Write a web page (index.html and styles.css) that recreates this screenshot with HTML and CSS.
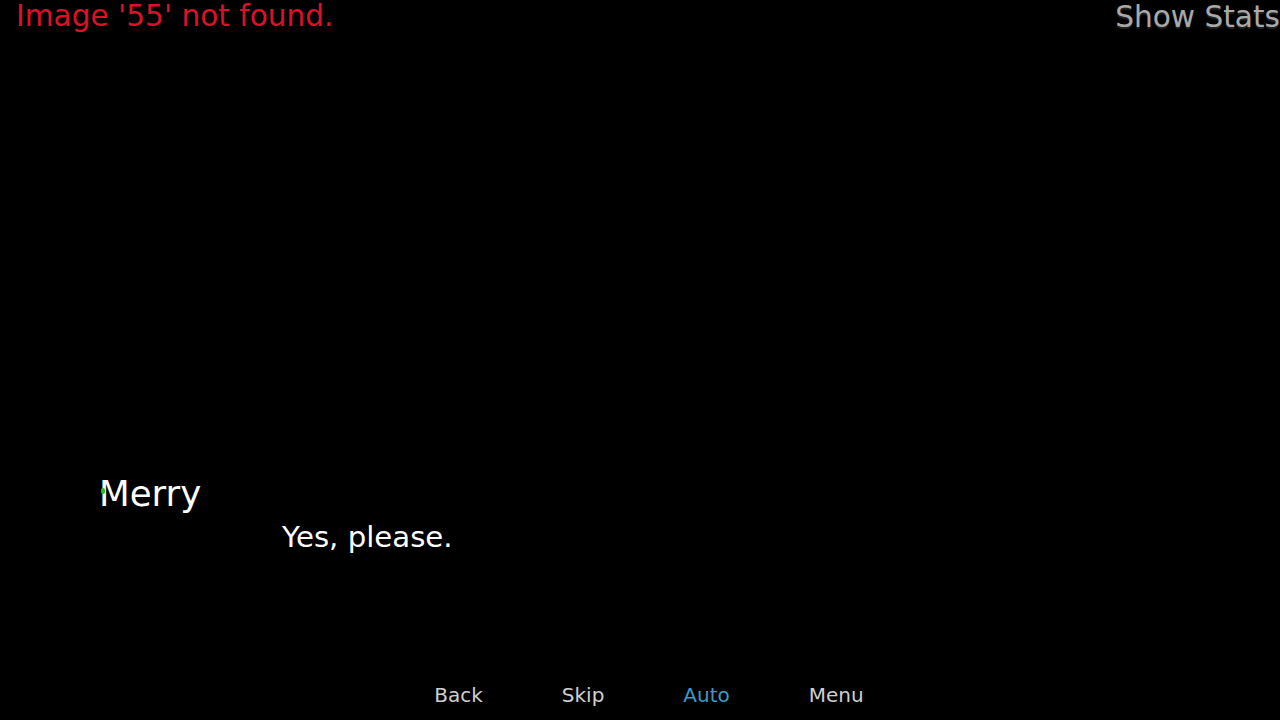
FILE: index.html
```html
<!DOCTYPE html>
<html lang="en">

<head>
    <meta charset="UTF-8">
    <meta name="viewport" content="width=device-width, initial-scale=1.0">
    <title>Merry</title>
    <link rel="stylesheet" href="styles.css">
</head>

<body>
    <div class="screen">
        <div class="topbar">
            <span class="error">Image '55' not found.</span>
            <span class="stats">Show Stats</span>
        </div>

        <div class="dialogue">
            <div class="namebox">
                <span class="name">Merry</span>
                <span class="marker"></span>
            </div>
            <p class="say">Yes, please.</p>
        </div>

        <div class="quick-menu">
            <span class="quick-btn">Back</span>
            <span class="quick-btn">Skip</span>
            <span class="quick-btn active">Auto</span>
            <span class="quick-btn">Menu</span>
        </div>
    </div>
</body>

</html>
```

FILE: styles.css
```css
body {
    margin: 0;
    background-color: #000;
    font-family: "DejaVu Sans", sans-serif;
    overflow: hidden;
}
.screen {
    height: 720px;
    display: flex;
    flex-direction: column;
}
.topbar {
    display: flex;
    justify-content: space-between;
    align-items: flex-start;
    height: 34px;
}
.error {
    color: #dc1128;
    font-size: 29.6px;
    line-height: 30px;
    padding-left: 16px;
    padding-top: 1px;
}
.stats {
    color: #a9a9a9;
    font-size: 29.6px;
    line-height: 30px;
    padding-top: 2px;
    text-shadow: 0 2px 1px #222;
}
.dialogue {
    margin-top: 442px;
    height: 209px;
}
.namebox {
    position: relative;
    padding-left: 99px;
}
.name {
    color: #fff;
    font-size: 35.6px;
    line-height: 36px;
}
.marker {
    position: absolute;
    left: 101px;
    top: 12px;
    width: 4px;
    height: 6px;
    border-radius: 2px;
    background-color: #22c02a;
}
.say {
    margin: 11px 0 0 0;
    padding-left: 282px;
    color: #fff;
    font-size: 29.2px;
    line-height: 28px;
}
.quick-menu {
    display: flex;
    justify-content: center;
    gap: 79px;
    padding-left: 18px;
}
.quick-btn {
    color: #cfcfcf;
    font-size: 20px;
    line-height: 20px;
}
.quick-btn.active {
    color: #3a9bc4;
}
```
